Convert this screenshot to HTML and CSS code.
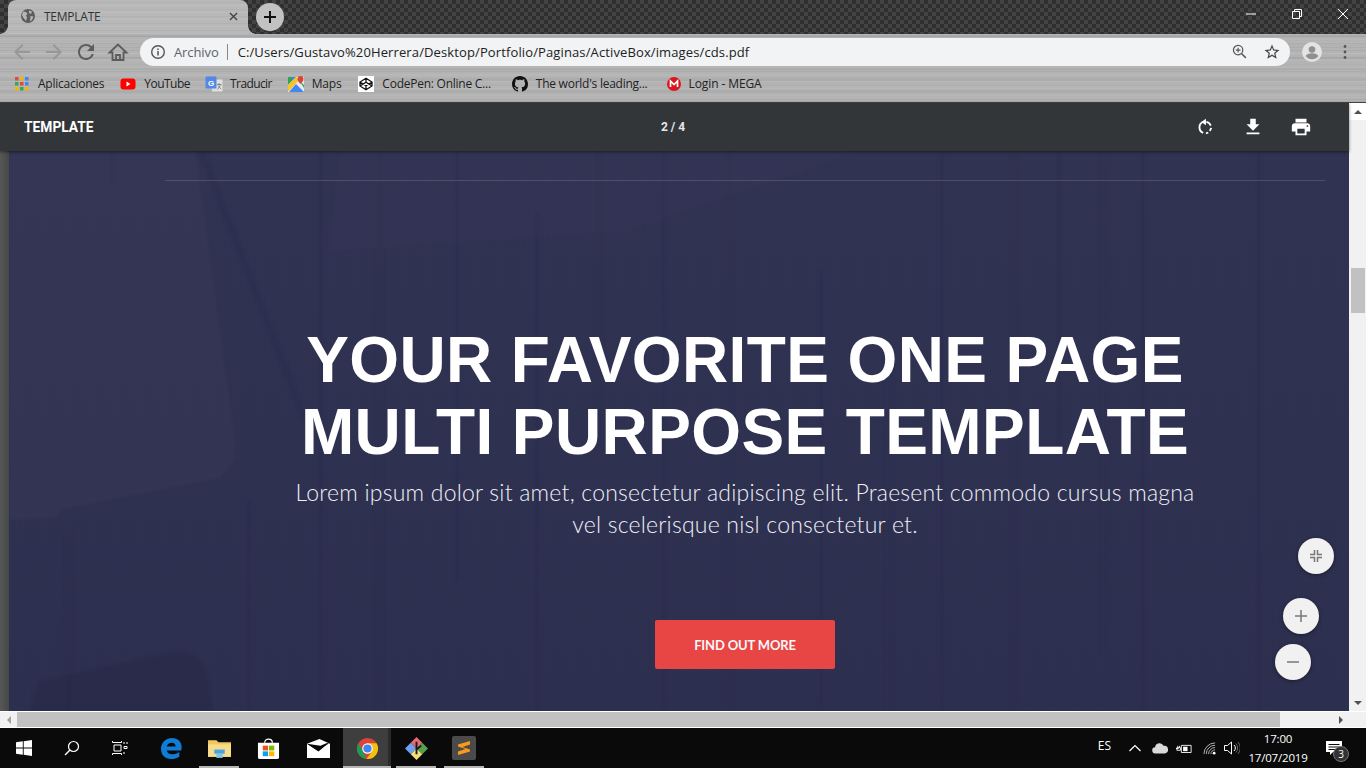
FILE: index.html
```html
<!DOCTYPE html>
<html lang="es">
<head>
<meta charset="utf-8">
<title>TEMPLATE</title>
<link rel="stylesheet" href="styles.css">
</head>
<body>
<div class="chrome-top">
  <div class="tabstrip">
    <div class="tab">
      <svg class="tab-globe" viewBox="0 0 16 16"><circle cx="8" cy="8" r="7" fill="#5c5c5c"/><path d="M3 3.500l3 .500 1.500 2-1.500 1.500L7 9.500 6 13 3.500 10 2 7zM9 2.500l3 1-1 2.500-2-1zM10.500 8l3 .500-1.500 3.500-2 1.500z" fill="#b5b5b5"/></svg>
      <span class="tab-title">TEMPLATE</span>
      <svg class="tab-close" viewBox="0 0 10 10"><path d="M1 1l8 8M9 1l-8 8" stroke="#444" stroke-width="1.500"/></svg>
    </div>
    <div class="newtab"><svg viewBox="0 0 14 14"><path d="M7 1v12M1 7h12" stroke="#111" stroke-width="2"/></svg></div>
    <div class="winctrls">
      <svg viewBox="0 0 12 12"><path d="M1 6h10" stroke="#fff" stroke-width="1"/></svg>
      <svg viewBox="0 0 12 12"><path d="M1.500 3.500h7v7h-7zM3.500 3.500v-2h7v7h-2" fill="none" stroke="#fff" stroke-width="1"/></svg>
      <svg viewBox="0 0 12 12"><path d="M1 1l10 10M11 1L1 11" stroke="#fff" stroke-width="1"/></svg>
    </div>
  </div>
  <div class="toolbar">
    <svg class="nav" viewBox="0 0 24 24"><path d="M20 11H7.800l5.600-5.600L12 4l-8 8 8 8 1.400-1.400L7.800 13H20z" fill="#979797"/></svg>
    <svg class="nav" viewBox="0 0 24 24"><path d="M4 11h12.200l-5.600-5.600L12 4l8 8-8 8-1.400-1.400 5.600-5.600H4z" fill="#979797"/></svg>
    <svg class="nav" viewBox="0 0 24 24"><path d="M17.650 6.350A7.958 7.958 0 0 0 12 4c-4.420 0-7.990 3.580-7.990 8s3.570 8 7.990 8c3.730 0 6.840-2.550 7.730-6h-2.080A5.990 5.990 0 0 1 12 18c-3.310 0-6-2.690-6-6s2.690-6 6-6c1.660 0 3.140.690 4.220 1.780L13 11h7V4z" fill="#5c5c5c"/></svg>
    <svg class="nav" viewBox="0 0 24 24"><path d="M12 4.500L3.500 12.500H6.500V20h11v-7.500h3z M10 20v-5h4v5" fill="none" stroke="#5c5c5c" stroke-width="1.800"/></svg>
    <div class="omnibox">
      <svg class="info" viewBox="0 0 16 16"><circle cx="8" cy="8" r="6.300" fill="none" stroke="#555" stroke-width="1.400"/><path d="M8 7v4.500M8 4.500v1.400" stroke="#555" stroke-width="1.500"/></svg>
      <span class="scheme">Archivo</span>
      <span class="sep"></span>
      <span class="url">C:/Users/Gustavo%20Herrera/Desktop/Portfolio/Paginas/ActiveBox/images/cds.pdf</span>
      <svg class="zoomi" viewBox="0 0 16 16"><circle cx="6.500" cy="6.500" r="5" fill="none" stroke="#555" stroke-width="1.300"/><path d="M10.300 10.300l4.500 4.500" stroke="#555" stroke-width="1.600"/><path d="M6.500 4v5M4 6.500h5" stroke="#555" stroke-width="1.200"/></svg>
      <svg class="star" viewBox="0 0 24 24"><path d="M22 9.240l-7.190-.620L12 2 9.190 8.630 2 9.240l5.460 4.730L5.820 21 12 17.270 18.180 21l-1.630-7.030L22 9.240zM12 15.400l-3.760 2.270 1-4.280-3.320-2.880 4.380-.380L12 6.100l1.710 4.040 4.380.380-3.320 2.880 1 4.280L12 15.400z" fill="#444"/></svg>
    </div>
    <svg class="avatar" viewBox="0 0 20 20"><circle cx="10" cy="10" r="10" fill="#e3e3e3"/><circle cx="10" cy="7.500" r="3.300" fill="#8f8f8f"/><path d="M3.500 14c1.500-2.200 4-2.800 6.500-2.800s5 .600 6.500 2.800c-1.500 2-4 3.300-6.500 3.300s-5-1.300-6.500-3.300z" fill="#8f8f8f"/></svg>
    <svg class="kebab" viewBox="0 0 4 16"><circle cx="2" cy="2.500" r="1.400" fill="#555"/><circle cx="2" cy="8" r="1.400" fill="#555"/><circle cx="2" cy="13.500" r="1.400" fill="#555"/></svg>
  </div>
  <div class="bookmarks">
    <div class="bm bm-apps">
      <svg viewBox="0 0 14 14"><rect x="0" y="0" width="3.500" height="3.500" fill="#e8453c"/><rect x="5" y="0" width="3.500" height="3.500" fill="#f4b400"/><rect x="10" y="0" width="3.500" height="3.500" fill="#4285f4"/><rect x="0" y="5" width="3.500" height="3.500" fill="#34a853"/><rect x="5" y="5" width="3.500" height="3.500" fill="#e8453c"/><rect x="10" y="5" width="3.500" height="3.500" fill="#4285f4"/><rect x="0" y="10" width="3.500" height="3.500" fill="#f4b400"/><rect x="5" y="10" width="3.500" height="3.500" fill="#34a853"/><rect x="10" y="10" width="3.500" height="3.500" fill="#f4b400"/></svg>
      <span>Aplicaciones</span>
    </div>
    <div class="bm bm-yt">
      <svg viewBox="0 0 16 16"><rect x="0.500" y="2.500" width="15" height="11" rx="3" fill="#f00"/><path d="M6.500 5.500v5l4-2.500z" fill="#fff"/></svg>
      <span>YouTube</span>
    </div>
    <div class="bm bm-tr">
      <svg viewBox="0 0 18 16"><path d="M7 3.500h10.500v12H7z" fill="#e0e0e0"/><rect x="0.500" y="0.500" width="11" height="12" rx="1" fill="#5288e8"/><text x="6" y="9.500" class="g-letter">G</text><path d="M12 8.500h4.500M14 7v1.500M12.500 13.500l3-4.500M13 9.500l3 3.500" stroke="#777" stroke-width=".8" fill="none"/></svg>
      <span>Traducir</span>
    </div>
    <div class="bm bm-maps">
      <svg viewBox="0 0 16 16"><path d="M0 1h16v15H0z" fill="#e9e9e9"/><path d="M0 1h8L0 9z" fill="#2fa35b"/><path d="M4 1h4L5 4H4z" fill="#4285f4"/><path d="M0 9l8-8 3 3L1 15H0z" fill="#f6c32c"/><path d="M1 16l7-8 8 8z" fill="#4285f4"/><path d="M11 4l5 5v3z" fill="#3aa65f"/><path d="M12.500 0c-2 0-3 1.300-3 3 0 2 3 5 3 5s3-3 3-5c0-1.700-1-3-3-3z" fill="#db4437"/></svg>
      <span>Maps</span>
    </div>
    <div class="bm bm-cp">
      <svg viewBox="0 0 16 16"><rect width="16" height="16" fill="#fff"/><path d="M8 2.200L14 6v4l-6 3.800L2 10V6zM2 6l6 3.800L14 6M2 10l6-3.800L14 10M8 2.200v3.900M8 9.900v3.900" fill="none" stroke="#111" stroke-width="1.300"/></svg>
      <span>CodePen: Online C...</span>
    </div>
    <div class="bm bm-gh">
      <svg viewBox="0 0 16 16"><path d="M8 0C3.580 0 0 3.580 0 8c0 3.540 2.290 6.530 5.470 7.590.400.070.550-.170.550-.380 0-.190-.010-.820-.010-1.490-2.010.370-2.530-.490-2.690-.940-.090-.230-.480-.940-.820-1.130-.280-.150-.680-.520-.010-.530.630-.010 1.080.580 1.230.820.720 1.210 1.870.870 2.330.660.070-.520.280-.870.510-1.070-1.780-.200-3.640-.890-3.640-3.950 0-.870.310-1.590.820-2.150-.080-.200-.360-1.020.080-2.120 0 0 .670-.210 2.200.820.640-.180 1.320-.270 2-.270.680 0 1.360.090 2 .270 1.530-1.040 2.200-.820 2.200-.820.440 1.100.160 1.920.080 2.120.510.560.820 1.270.820 2.150 0 3.070-1.870 3.750-3.650 3.950.290.250.540.730.540 1.480 0 1.070-.010 1.930-.010 2.200 0 .210.150.460.550.380A8.013 8.013 0 0 0 16 8c0-4.420-3.580-8-8-8z" fill="#111"/></svg>
      <span>The world's leading...</span>
    </div>
    <div class="bm bm-mega">
      <svg viewBox="0 0 16 16"><circle cx="8" cy="8" r="7" fill="#d9161f"/><path d="M4.500 11V5l3.500 3.500L11.500 5v6" fill="none" stroke="#fff" stroke-width="1.700"/></svg>
      <span>Login - MEGA</span>
    </div>
  </div>
</div>

<div class="viewer-area">
  <div class="viewer">
    <div class="pdfbar">
      <span class="pdf-title">TEMPLATE</span>
      <span class="pdf-pages">2 / 4</span>
      <div class="pdf-actions">
        <svg viewBox="0 0 24 24"><path d="M9.500 6.600A6.500 6.500 0 0 0 10 18.400" fill="none" stroke="#fff" stroke-width="2"/><path d="M13 3v7L8 6.500z" fill="#fff"/><path d="M13.500 6.500a6.500 6.500 0 0 1 4.800 4M18.700 13a6.500 6.500 0 0 1-1.600 3.200M15.500 18a6.500 6.500 0 0 1-2.500.800" fill="none" stroke="#fff" stroke-width="2"/></svg>
        <svg viewBox="0 0 24 24"><path d="M19 9h-4V3H9v6H5l7 7 7-7zM5 18v2h14v-2H5z" fill="#fff"/></svg>
        <svg viewBox="0 0 24 24"><path d="M19 8H5c-1.660 0-3 1.340-3 3v6h4v4h12v-4h4v-6c0-1.660-1.340-3-3-3zm-3 11H8v-5h8v5zm3-7c-.550 0-1-.450-1-1s.450-1 1-1 1 .450 1 1-.450 1-1 1zm-1-9H6v4h12V3z" fill="#fff"/></svg>
      </div>
    </div>
    <div class="canvas">
      <div class="page">
        <svg class="wood" viewBox="0 0 1340 560" preserveAspectRatio="none">
          <path d="M0 0H186L226 290Q228 320 205 328L52 358 48 366 0 369z" fill="#3d3f5e" opacity=".32"/>
          <path d="M192 0L262 180 296 270" stroke="#26284a" stroke-width="6" opacity=".32" fill="none"/>
          <path d="M330 0H850L620 80L320 100z" fill="#3e4060" opacity=".14"/>
          <path d="M30 530L158 502Q190 498 198 520L204 560H20z" fill="#22243f" opacity=".38"/>
          <path d="M103 0V34M312 0V560M448 0V430M528 60V560M655 0V560M812 120V560M933 0V560M1050 0V300M1134 0V560M1250 0V560M240 350V560" stroke="#232545" stroke-width="3" opacity=".2" fill="none"/>
          <path d="M370 0V560M590 0V300M720 0V560M880 200V560M1005 0V560M1095 0V500M60 380V560" stroke="#232545" stroke-width="8" opacity=".08" fill="none"/>
        </svg>
        <div class="hero">
          <div class="rule"></div>
          <h1 class="headline">YOUR FAVORITE ONE PAGE<br>MULTI PURPOSE TEMPLATE</h1>
          <p class="lead">Lorem ipsum dolor sit amet, consectetur adipiscing elit. Praesent commodo cursus magna<br>vel scelerisque nisl consectetur et.</p>
          <a class="cta">FIND OUT MORE</a>
        </div>
      </div>
      <button class="fab fab-fit"><svg viewBox="0 0 14 14"><path d="M5.500 1v4.500H1M8.500 1v4.500H13M5.500 13V8.500H1M8.500 13V8.500H13" fill="none" stroke="#777" stroke-width="1.500"/></svg></button>
      <button class="fab fab-plus"><svg viewBox="0 0 14 14"><path d="M7 1v12M1 7h12" stroke="#777" stroke-width="1.500"/></svg></button>
      <button class="fab fab-minus"><svg viewBox="0 0 14 14"><path d="M1 7h12" stroke="#777" stroke-width="1.500"/></svg></button>
    </div>
  </div>
  <div class="vscroll">
    <div class="sb-btn"><span class="arrow-up"></span></div>
    <div class="vtrack"><div class="vthumb"></div></div>
    <div class="sb-btn"><span class="arrow-down"></span></div>
  </div>
</div>

<div class="hscroll">
  <div class="sb-hbtn"><span class="arrow-left"></span></div>
  <div class="hthumb"></div>
  <div class="htrack"></div>
  <div class="sb-hbtn"><span class="arrow-right"></span></div>
  <div class="sb-corner"></div>
</div>

<div class="taskbar">
  <div class="tb-item tb-start"><svg viewBox="0 0 16 16"><path d="M0 2.300L6.800 1.300V7.600H0zM7.700 1.200L16 0V7.600H7.700zM0 8.400H6.800V14.700L0 13.700zM7.700 8.400H16V16L7.700 14.800z" fill="#fff"/></svg></div>
  <div class="tb-item"><svg viewBox="0 0 16 16"><circle cx="9.500" cy="6.500" r="5" fill="none" stroke="#fff" stroke-width="1.200"/><path d="M6 10L1 15" stroke="#fff" stroke-width="1.500"/></svg></div>
  <div class="tb-item"><svg viewBox="0 0 16 16"><path d="M.5 2.500h9M.5 1v1.500M9.500 1v1.500M2 5h7v6H2zM.5 13.500h9M.5 13.500V15M9.500 13.500V15M12 2v2M15 2v2M12 6.500h3v2h-3zM12 12v2" fill="none" stroke="#fff" stroke-width="1"/></svg></div>
  <div class="tb-item tb-edge"><svg class="tb-lg" viewBox="0 0 22 22"><path d="M11.500 1C5 1 1 6 1 11.500 1 17.500 5 21 10.500 21c3 0 5.500-.800 8-2.200v-4.500c-2 1.400-4.500 2.200-7 2.200-2.800 0-4.700-1.400-5-3.500h13.800c.3-1 .4-2 .4-3C20.700 4.500 17 1 11.500 1zM6.500 9c.3-2 2.500-3.500 4.700-3.500S15 7 15 9z" fill="#0f7cd6"/></svg></div>
  <div class="tb-item tb-open"><svg class="tb-lg" viewBox="0 0 22 20"><path d="M0 2h8l2 2h12v14H0z" fill="#f0c85e"/><path d="M0 6h22v12H0z" fill="#f7dc8b"/><path d="M6 11h10v4H6z" fill="#4aa3df"/><path d="M8 15h6v4H8z" fill="#7fc4ea"/></svg></div>
  <div class="tb-item tb-store"><svg class="tb-lg" viewBox="0 0 24 24"><path d="M1 6h22v15a2 2 0 0 1-2 2H3a2 2 0 0 1-2-2z" fill="#fff"/><path d="M8 6c0-5 8-5 8 0" fill="none" stroke="#fff" stroke-width="1.300"/><rect x="6" y="9" width="5.500" height="5" fill="#f25022"/><rect x="12.500" y="9" width="5.500" height="5" fill="#7fba00"/><rect x="6" y="15" width="5.500" height="5" fill="#00a4ef"/><rect x="12.500" y="15" width="5.500" height="5" fill="#ffb900"/></svg></div>
  <div class="tb-item tb-mail"><svg class="tb-lg" viewBox="0 0 24 20"><path d="M0 5L13 0l11 5v15H0z" fill="#fff"/><path d="M0 5L12 13 24 3 14 7z" fill="#0a0a0a"/><path d="M0 5L11 12 24 4 12 9z" fill="#0a0a0a"/></svg></div>
  <div class="tb-item tb-active">
    <svg class="tb-lg" viewBox="0 0 24 24"><circle cx="12" cy="12" r="11" fill="#db4437"/><path d="M2.500 6.500L7.200 14.800 11 23A11 11 0 0 1 2.500 6.500z" fill="#1e9c57"/><path d="M21.500 6.500H12L16.800 14.800 11 23A11 11 0 0 0 21.500 6.500z" fill="#f4c20d"/><circle cx="12" cy="12" r="5.500" fill="#fff"/><circle cx="12" cy="12" r="4.300" fill="#4285f4"/></svg>
  </div>
  <div class="tb-item tb-open tb-git"><svg class="tb-lg" viewBox="0 0 24 24"><path d="M6 12l6-6 6 6-6 6z" fill="#2a2a2a"/><path d="M0 12l6-6 6 6-6 6z" fill="#6ea1f2"/><path d="M12 12l6-6 6 6-6 6z" fill="#57a04c"/><path d="M6 6l6-6 6 6-6 6z" fill="#e56b76"/><path d="M6 18l6-6 6 6-6 6z" fill="#f5de7a"/><path d="M12 5v13M12 13l5-4" stroke="#1a1a1a" stroke-width="2" fill="none"/></svg></div>
  <div class="tb-item tb-open"><svg class="tb-xl" viewBox="0 0 24 24"><rect width="24" height="24" rx="2" fill="#4a4a4a"/><path d="M6 8.500L18 5v3.500L10.500 11 18 13.500v2L6 19v-3.500L13.500 13 6 10.500z" fill="#f89a1c"/></svg></div>
  <div class="tray">
    <span class="tray-lang">ES</span>
    <svg class="tray-caret" viewBox="0 0 12 8"><path d="M.5 7L6 1.500 11.500 7" fill="none" stroke="#fff" stroke-width="1.200"/></svg>
    <svg class="tray-cloud" viewBox="0 0 18 12"><path d="M4 11.500a3.500 3.500 0 0 1-.5-7A5 5 0 0 1 13 3a4 4 0 0 1 1.500 8.500z" fill="#d9d9d9"/></svg>
    <svg class="tray-batt" viewBox="0 0 18 12"><path d="M6 2.500h11v8H6z" fill="none" stroke="#fff"/><path d="M8 4h5v5H8z" fill="#fff"/><path d="M0 6h3M2 3v2M4 3v2M1 5h4v3H1z" stroke="#fff" fill="none"/></svg>
    <svg class="tray-wifi" viewBox="0 0 14 14"><path d="M1 13a12 12 0 0 1 12-12M3.500 13a9.500 9.500 0 0 1 9.500-9.500M6 13a7 7 0 0 1 7-7M8.500 13A4.500 4.500 0 0 1 13 8.500" fill="none" stroke="#bbb" stroke-width="1"/><circle cx="12" cy="12" r="1.500" fill="#fff"/></svg>
    <svg class="tray-vol" viewBox="0 0 16 14"><path d="M.5 4.500h3L7.500 1v12l-4-3.500h-3z" fill="none" stroke="#fff"/><path d="M10 4a4 4 0 0 1 0 6" fill="none" stroke="#fff"/><path d="M12 2.500a7 7 0 0 1 0 9M14 1a9 9 0 0 1 0 12" fill="none" stroke="#666"/></svg>
    <div class="clock"><span>17:00</span><span>17/07/2019</span></div>
    <div class="notif">
      <svg viewBox="0 0 16 15"><path d="M0 0h16v11H7l-3 3v-3H0z" fill="#fff"/><path d="M2.500 3.500h11M2.500 6h11M2.500 8.500h8" stroke="#0a0a0a"/></svg>
      <span class="badge">3</span>
    </div>
  </div>
</div>
</body>
</html>
```

FILE: styles.css
```css
* { box-sizing: border-box; }
html, body { margin: 0; height: 100%; overflow: hidden; }
body {
  width: 1366px; height: 768px;
  display: flex; flex-direction: column;
  font-family: "Open Sans", "Liberation Sans", sans-serif;
  background: #0a0a0a;
}
svg { display: block; flex: none; }

/* browser chrome */
.chrome-top {
  background-color: #b3b3b3;
  background-image:
    repeating-linear-gradient(0deg, rgba(255,255,255,.07) 0 1px, transparent 1px 3px, rgba(0,0,0,.04) 3px 4px, transparent 4px 7px),
    repeating-linear-gradient(0deg, rgba(0,0,0,.04) 0 2px, transparent 2px 5px, rgba(255,255,255,.05) 5px 6px, transparent 6px 11px);
}
.tabstrip {
  height: 34px; display: flex; align-items: flex-start;
  background-color: #3a3a3a;
  background-image:
    linear-gradient(45deg, #2f2f2f 25%, transparent 25%, transparent 75%, #2f2f2f 75%),
    linear-gradient(45deg, #2f2f2f 25%, #434343 25%, #434343 75%, #2f2f2f 75%);
  background-size: 8px 8px;
  background-position: 0 0, 4px 4px;
  padding-left: 8px;
}
.tab {
  position: relative;
  width: 240px; height: 34px; display: flex; align-items: center;
  padding: 0 10px 2px 12px;
  border-radius: 8px 8px 0 0;
  background-color: #b8b8b8;
  background-image: repeating-linear-gradient(0deg, rgba(255,255,255,.07) 0 1px, transparent 1px 3px, rgba(0,0,0,.04) 3px 4px, transparent 4px 7px);
}
.tab::before, .tab::after { content: ""; position: absolute; bottom: 0; width: 8px; height: 8px; }
.tab::before { left: -8px; background: radial-gradient(circle at 0 0, transparent 7.500px, #b8b8b8 8px); }
.tab::after { right: -8px; background: radial-gradient(circle at 100% 0, transparent 7.500px, #b8b8b8 8px); }
.tab-globe { width: 16px; height: 16px; }
.tab-title { margin-left: 8px; flex: 1; font-size: 12px; color: #333; letter-spacing: -.25px; }
.tab-close { width: 9px; height: 9px; }
.newtab {
  width: 28px; height: 28px; margin: 3px 0 0 8px; border-radius: 50%;
  background: #c2c2c2; display: flex; align-items: center; justify-content: center;
}
.newtab svg { width: 14px; height: 14px; }
.winctrls { margin-left: auto; display: flex; align-items: center; height: 28px; padding-right: 17px; gap: 34px; }
.winctrls svg { width: 12px; height: 12px; }

.toolbar { height: 35px; display: flex; align-items: center; padding-left: 10px; }
.nav { width: 24px; height: 24px; margin-right: 8px; }
.nav:nth-child(4) { margin-right: 10px; }
.omnibox {
  width: 1150px; height: 28px; border-radius: 14px;
  background: #f1f3f4; display: flex; align-items: center; padding: 0 9px 0 10px;
}
.info { width: 16px; height: 16px; }
.scheme { margin-left: 8px; font-size: 13px; color: #5f6368; letter-spacing: -.1px; }
.sep { width: 1px; height: 16px; background: #888; margin: 0 9px 0 8px; }
.url { flex: 1; font-size: 13px; color: #222; letter-spacing: .12px; margin-left: 1px; }
.zoomi { width: 15px; height: 15px; margin-right: 16px; }
.star { width: 18px; height: 18px; }
.avatar { width: 20px; height: 20px; margin-left: 12px; }
.kebab { width: 4px; height: 16px; margin-left: 21px; }

.bookmarks {
  height: 34px; display: flex; align-items: center; padding: 0 0 4px 15px;
  border-bottom: 1px solid #444;
}
.bm { display: flex; align-items: center; gap: 8px; font-size: 12px; color: #222; letter-spacing: -.25px; white-space: nowrap; }
.bm svg { width: 16px; height: 16px; }
.bm-apps { gap: 9px; margin-right: 16px; }
.bm-apps svg { width: 14px; height: 14px; }
.bm-yt { margin-right: 15px; }
.bm-yt span { letter-spacing: -.5px; }
.bm-tr { gap: 7px; margin-right: 16px; }
.bm-tr svg { width: 18px; }
.bm-tr span { letter-spacing: -.6px; }
.bm-maps { margin-right: 17px; }
.bm-cp { margin-right: 21px; }
.bm-gh { margin-right: 18px; }
.bm-mega { gap: 7px; }
.bm-mega span { letter-spacing: -.1px; }
.g-letter { font: bold 8px "Liberation Sans", sans-serif; fill: #fff; text-anchor: middle; }

/* pdf viewer */
.viewer-area { height: 608px; display: flex; }
.viewer { width: 1349px; display: flex; flex-direction: column; background: #4a4d4c; }
.pdfbar {
  height: 48px; flex: none; background: #323639; color: #fff;
  display: flex; align-items: center; padding: 0 37px 0 24px;
  box-shadow: 0 1px 3px rgba(0,0,0,.5); position: relative; z-index: 2;
}
.pdf-title { width: 637px; font: 700 13.800px Roboto, sans-serif; }
.pdf-pages { font: 700 12px Roboto, sans-serif; color: #e8e8e8; }
.pdf-actions { margin-left: auto; display: flex; gap: 26px; }
.pdf-actions svg { width: 22px; height: 22px; }

.canvas { flex: 1; position: relative; padding-left: 9px; overflow: hidden; background: linear-gradient(90deg, #555856 0, #454846 9px); }
.page {
  position: relative; height: 100%; overflow: hidden;
  background-color: #303252;
  background-image:
    repeating-linear-gradient(90deg, rgba(20,22,50,.05) 0 1px, transparent 1px 3px),
    linear-gradient(180deg, rgba(60,62,90,.12), rgba(20,20,60,.08));
}
.wood { position: absolute; inset: 0; width: 100%; height: 100%; filter: blur(1.500px); }
.hero {
  position: relative; height: 100%; display: flex; flex-direction: column; align-items: center;
  padding: 29px 24px 0 156px; color: #fff; text-align: center;
}
.rule { width: 100%; height: 1px; background: rgba(255,255,255,.14); }
.headline {
  margin: 143px 0 0; font: 700 64px/72px "Liberation Sans", Arial, sans-serif;
  letter-spacing: .4px; white-space: nowrap;
}
.lead {
  margin: 8px 0 0; font: 300 23px/32px Lato, "Open Sans", sans-serif;
  letter-spacing: .22px; color: #f0f0f6; white-space: nowrap;
}
.cta {
  margin-top: 80px; width: 180px; height: 49px; border-radius: 2px;
  background: #e84545; color: #f7f7f7; display: flex; align-items: center; justify-content: center;
  font: 700 13px Lato, sans-serif; letter-spacing: -.15px;
}
.fab {
  position: absolute; width: 36px; height: 36px; border-radius: 50%; border: 0; padding: 0;
  background: #f1f1f1; display: flex; align-items: center; justify-content: center;
  box-shadow: 0 1px 4px rgba(0,0,0,.4);
}
.fab svg { width: 14px; height: 14px; }
.fab-fit { left: 1298px; top: 387px; }
.fab-plus { left: 1283px; top: 447px; }
.fab-minus { left: 1275px; top: 493px; }

/* scrollbars */
.vscroll { width: 17px; background: #f1f1f1; display: flex; flex-direction: column; }
.sb-btn { height: 17px; flex: none; background: #fff; display: flex; align-items: center; justify-content: center; }
.sb-btn:last-child { background: #f1f1f1; }
.vtrack { flex: 1; padding: 148px 1px 0 2px; }
.vthumb { height: 45px; background: #c1c1c1; }
.arrow-up, .arrow-down, .arrow-left, .arrow-right { width: 0; height: 0; border: 4px solid transparent; }
.arrow-up { border-bottom-color: #505050; border-top-width: 0; }
.arrow-down { border-top-color: #505050; border-bottom-width: 0; }
.arrow-left { border-right-color: #a0a0a0; border-left-width: 0; }
.arrow-right { border-left-color: #505050; border-right-width: 0; }
.hscroll { height: 17px; display: flex; background: #f1f1f1; border-top: 1px solid #fff; border-bottom: 1px solid #fff; }
.sb-hbtn { width: 17px; flex: none; display: flex; align-items: center; justify-content: center; }
.hthumb { width: 1263px; background: #c1c1c1; }
.htrack { flex: 1; }
.sb-corner { width: 17px; background: #f1f1f1; }

/* taskbar */
.taskbar { height: 40px; flex: none; display: flex; align-items: stretch; background: #0a0a0a; color: #fff; }
.tb-item { width: 48px; position: relative; display: flex; align-items: center; justify-content: center; }
.tb-item svg { width: 16px; height: 16px; }
.tb-item svg.tb-lg { width: 23px; height: 23px; }
.tb-item svg.tb-xl { width: 24px; height: 24px; }
.tb-edge { margin-left: 3px; }
.tb-store { margin-left: 1px; }
.tb-mail { margin-left: 2px; }
.tb-open::after { content: ""; position: absolute; left: 4px; right: 4px; bottom: 0; height: 2px; background: #b5b5b5; }
.tb-active { margin-left: 1px; background: #3e3e3e; box-shadow: inset -3px 0 0 #2a2a2a; }
.tb-active::after { content: ""; position: absolute; left: 0; right: 0; bottom: 0; height: 2px; background: #b5b5b5; }
.tb-git { margin-left: 1px; }
.tray { margin-left: auto; display: flex; align-items: center; padding-right: 24px; }
.tray-lang { font-size: 12px; margin: -5px 18px 0 0; }
.tray-caret { width: 12px; height: 8px; margin-right: 11px; }
.tray-cloud { width: 16px; height: 11px; margin-right: 8px; }
.tray-batt { width: 16px; height: 11px; margin-right: 11px; }
.tray-wifi { width: 13px; height: 13px; margin-right: 8px; }
.tray-vol { width: 16px; height: 14px; margin-right: 8px; }
.clock { display: flex; flex-direction: column; align-items: center; font-size: 11.500px; line-height: 19px; letter-spacing: -.2px; width: 60px; margin-right: 18px; }
.notif { position: relative; width: 16px; height: 15px; }
.notif svg { width: 16px; height: 15px; }
.badge {
  position: absolute; left: 7px; top: 5px; width: 16px; height: 16px; border-radius: 50%;
  background: #333; border: 1px solid #777; color: #fff; font-size: 10px; line-height: 14px; text-align: center;
}
```
